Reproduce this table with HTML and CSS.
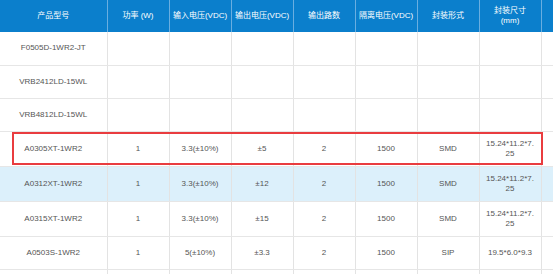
FILE: index.html
```html
<!DOCTYPE html>
<html lang="zh">
<head>
<meta charset="utf-8">
<link rel="stylesheet" href="styles.css">
</head>
<body>
<div class="wrap">
<table class="spec">
<colgroup>
<col class="c-model"><col class="c"><col class="c"><col class="c"><col class="c"><col class="c"><col class="c"><col class="c"><col class="c-extra">
</colgroup>
<thead>
<tr><th>产品型号</th><th>功率 (W)</th><th>输入电压(VDC)</th><th>输出电压(VDC)</th><th>输出路数</th><th>隔离电压(VDC)</th><th>封装形式</th><th>封装尺寸<br>(mm)</th><th></th></tr>
</thead>
<tbody>
<tr><td>F0505D-1WR2-JT</td><td></td><td></td><td></td><td></td><td></td><td></td><td></td><td></td></tr>
<tr><td>VRB2412LD-15WL</td><td></td><td></td><td></td><td></td><td></td><td></td><td></td><td></td></tr>
<tr><td>VRB4812LD-15WL</td><td></td><td></td><td></td><td></td><td></td><td></td><td></td><td></td></tr>
<tr class="marked"><td>A0305XT-1WR2</td><td>1</td><td>3.3(±10%)</td><td>±5</td><td>2</td><td>1500</td><td>SMD</td><td>15.24*11.2*7.<br>25</td><td></td></tr>
<tr class="hover"><td>A0312XT-1WR2</td><td>1</td><td>3.3(±10%)</td><td>±12</td><td>2</td><td>1500</td><td>SMD</td><td>15.24*11.2*7.<br>25</td><td></td></tr>
<tr><td>A0315XT-1WR2</td><td>1</td><td>3.3(±10%)</td><td>±15</td><td>2</td><td>1500</td><td>SMD</td><td>15.24*11.2*7.<br>25</td><td></td></tr>
<tr><td>A0503S-1WR2</td><td>1</td><td>5(±10%)</td><td>±3.3</td><td>2</td><td>1500</td><td>SIP</td><td>19.5*6.0*9.3</td><td></td></tr>
<tr class="tail"><td></td><td></td><td></td><td></td><td></td><td></td><td></td><td></td><td></td></tr>
</tbody>
</table>
<div class="redbox"></div>
</div>
</body>
</html>
```

FILE: styles.css
```css
html, body {
  margin: 0;
  padding: 0;
  background: #fff;
  overflow: hidden;
}
.wrap {
  position: relative;
  width: 553px;
  height: 274px;
  overflow: hidden;
}
.spec {
  border-collapse: collapse;
  table-layout: fixed;
  width: 553px;
  font-family: "Liberation Sans", "Noto Sans CJK SC", sans-serif;
  font-size: 8px;
  line-height: 10px;
  color: #555;
  text-align: center;
}
.c-model { width: 107px; }
.c { width: 62px; }
.c-extra { width: 12px; }
.spec th {
  background: #0b7fcc;
  color: #fff;
  font-weight: normal;
  height: 32px;
  box-sizing: border-box;
  padding: 0 2px;
  border-right: 1px solid #6aaee0;
}
.spec td {
  height: 33px;
  box-sizing: border-box;
  padding: 7px 3px;
  border-right: 1px solid #e3e3e3;
  border-bottom: 1px solid #e6e6e6;
}
.spec tr.hover td {
  background: #dcf0fb;
}
.redbox {
  position: absolute;
  left: 12px;
  top: 132px;
  width: 531px;
  height: 33px;
  box-sizing: border-box;
  border: 2px solid #e93c3f;
}
```
